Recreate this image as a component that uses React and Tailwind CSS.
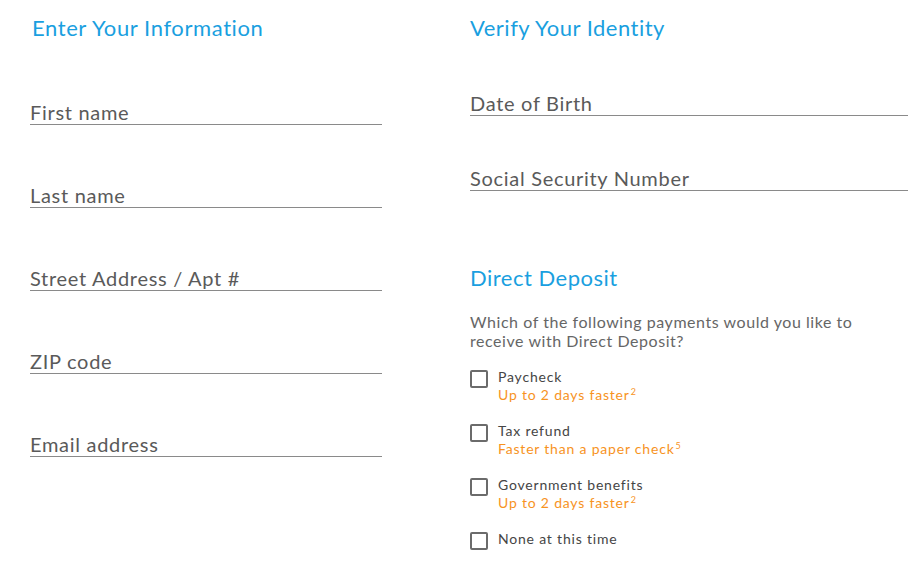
import React from "react";

const Field = ({ label }) => (
  <div className="border-b border-[#8a8a8a]">
    <span className="block text-[20px] leading-[24px] tracking-[0.7px] text-[#5a5a5a]">{label}</span>
  </div>
);

const Option = ({ title, note, sup }) => (
  <label className="flex items-start gap-[10px]">
    <span className="mt-[2px] block w-[18px] h-[18px] shrink-0 border-2 border-[#6b6b6b] rounded-[2px] bg-white" />
    <span className="flex flex-col text-[14px] leading-[18px] tracking-[0.8px]">
      <span className="h-[18px] text-[#454545]">{title}</span>
      {note && (
        <span className="h-[18px] text-[#f7931e]">
          {note}
          <span className="relative -top-[5px] text-[9px] leading-none tracking-normal ml-[1px]">{sup}</span>
        </span>
      )}
    </span>
  </label>
);

export default function App() {
  return (
    <div className="w-[920px] h-[561px] bg-white overflow-hidden font-['Lato','Open_Sans',sans-serif]">
      <div className="flex pt-[14px] pl-[30px] gap-[88px]">

        {/* Left column */}
        <div className="w-[352px] flex flex-col gap-[58px]">
          <h2 className="text-[22px] leading-[28px] tracking-[0.6px] text-[#1a9fe0] pl-[2px]">Enter Your Information</h2>
          <Field label="First name" />
          <Field label="Last name" />
          <Field label="Street Address / Apt #" />
          <Field label="ZIP code" />
          <Field label="Email address" />
        </div>

        {/* Right column */}
        <div className="w-[438px] flex flex-col">
          <h2 className="text-[22px] leading-[28px] tracking-[0.5px] text-[#1a9fe0]">Verify Your Identity</h2>
          <div className="mt-[49px] flex flex-col gap-[50px]">
            <Field label="Date of Birth" />
            <Field label="Social Security Number" />
          </div>

          <h2 className="mt-[73px] text-[22px] leading-[28px] tracking-[0.5px] text-[#1a9fe0]">Direct Deposit</h2>
          <p className="mt-[20px] text-[16px] leading-[19px] tracking-[0.55px] text-[#666] w-[420px]">
            Which of the following payments would you like to receive with Direct Deposit?
          </p>

          <div className="mt-[18px] flex flex-col gap-[18px]">
            <Option title="Paycheck" note="Up to 2 days faster" sup="2" />
            <Option title="Tax refund" note="Faster than a paper check" sup="5" />
            <Option title="Government benefits" note="Up to 2 days faster" sup="2" />
            <Option title="None at this time" />
          </div>
        </div>

      </div>
    </div>
  );
}
